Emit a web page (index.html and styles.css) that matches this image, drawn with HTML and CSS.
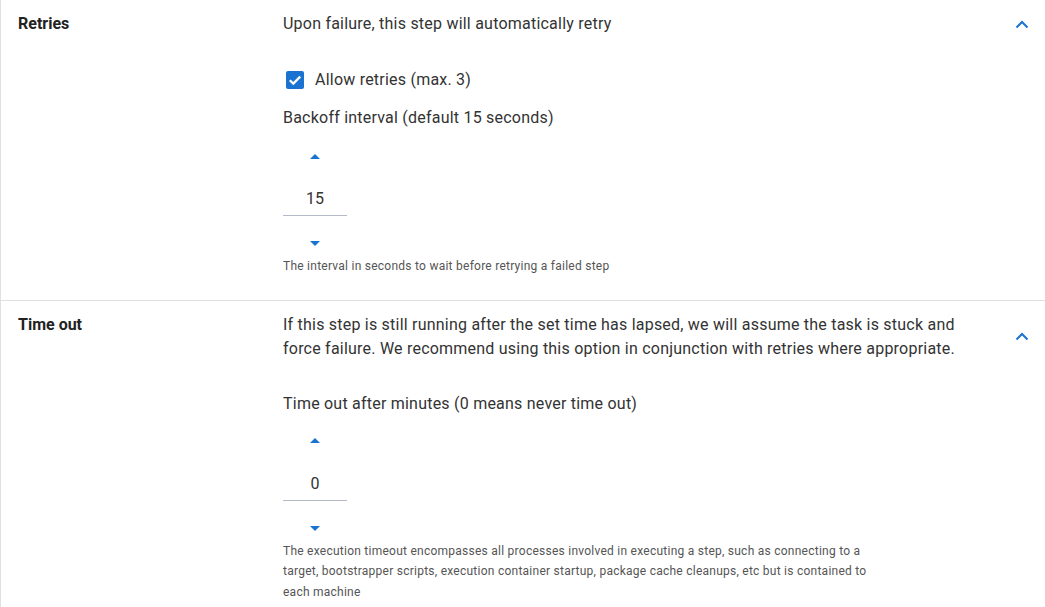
FILE: index.html
```html
<!DOCTYPE html>
<html>
<head>
<meta charset="utf-8">
<link rel="stylesheet" href="styles.css">
</head>
<body>
<div class="page">
  <section class="row row-first">
    <div class="label">Retries</div>
    <div class="content">
      <div class="head">
        <div class="desc">Upon failure, this step will automatically retry</div>
        <button class="chev" aria-label="collapse">
          <svg width="14" height="9" viewBox="0 0 14 9"><path d="M1.5 7.5 L7 2 L12.5 7.5" fill="none" stroke="#1a73d0" stroke-width="2"/></svg>
        </button>
      </div>
      <div class="body">
        <label class="check">
          <span class="box"><svg width="16" height="16" viewBox="0 0 16 16"><path d="M2.8 8.2 L6.3 11.6 L13.2 4.6" fill="none" stroke="#fff" stroke-width="2.3"/></svg></span>
          <span>Allow retries (max. 3)</span>
        </label>
        <div class="field-label gap-a">Backoff interval (default 15 seconds)</div>
        <div class="spinner spinner-first">
          <span class="arrow up"></span>
          <div class="num">15</div>
          <span class="arrow down"></span>
        </div>
        <div class="helper">The interval in seconds to wait before retrying a failed step</div>
      </div>
    </div>
  </section>
  <section class="row">
    <div class="label">Time out</div>
    <div class="content">
      <div class="head">
        <div class="desc">If this step is still running after the set time has lapsed, we will assume the task is stuck and force failure. We recommend using this option in conjunction with retries where appropriate.</div>
        <button class="chev" aria-label="collapse">
          <svg width="14" height="9" viewBox="0 0 14 9"><path d="M1.5 7.5 L7 2 L12.5 7.5" fill="none" stroke="#1a73d0" stroke-width="2"/></svg>
        </button>
      </div>
      <div class="body">
        <div class="field-label">Time out after minutes (0 means never time out)</div>
        <div class="spinner spinner-tight">
          <span class="arrow up"></span>
          <div class="num">0</div>
          <span class="arrow down"></span>
        </div>
        <div class="helper">The execution timeout encompasses all processes involved in executing a step, such as connecting to a target, bootstrapper scripts, execution container startup, package cache cleanups, etc but is contained to each machine</div>
      </div>
    </div>
  </section>
</div>
</body>
</html>
```
FILE: styles.css
```css
html, body {
  margin: 0;
  padding: 0;
  background: #fff;
}
body {
  font-family: Roboto, "Liberation Sans", sans-serif;
  color: #333333;
}
.page {
  border-left: 1px solid #e0e0e0;
  min-height: 607px;
}
.row {
  display: flex;
  padding: 12px 11px 25px 17px;
}
.row-first {
  padding-bottom: 23px;
}
.row + .row {
  border-top: 1px solid #e0e0e0;
}
.label {
  width: 265px;
  flex: none;
  font-size: 16px;
  line-height: 24px;
  font-weight: 700;
  color: #222;
}
.content {
  flex: 1;
}
.head {
  display: flex;
  align-items: center;
}
.desc {
  flex: 1;
  max-width: 700px;
  font-size: 16px;
  line-height: 24px;
  letter-spacing: 0.22px;
}
.chev {
  margin-left: auto;
  width: 24px;
  height: 24px;
  border: 0;
  background: none;
  padding: 0;
  display: flex;
  align-items: center;
  justify-content: center;
}
.body {
  padding-top: 31px;
}
.check {
  display: flex;
  align-items: center;
  gap: 11px;
  height: 24px;
  padding-left: 3px;
  font-size: 16px;
  line-height: 24px;
  letter-spacing: 0.22px;
  margin-top: 1px;
}
.box {
  width: 18px;
  height: 18px;
  border-radius: 2px;
  background: #1a73d0;
  display: flex;
  align-items: center;
  justify-content: center;
}
.field-label {
  font-size: 16px;
  line-height: 24px;
  letter-spacing: 0.22px;
}
.gap-a {
  margin-top: 14px;
}
.spinner {
  width: 64px;
  display: flex;
  flex-direction: column;
  align-items: center;
  padding-top: 15px;
}
.spinner-tight {
  padding-top: 13px;
}
.arrow {
  width: 0;
  height: 0;
  border-left: 5px solid transparent;
  border-right: 5px solid transparent;
}
.arrow.up {
  border-bottom: 5px solid #1a73d0;
  margin: 9px 0 10px;
}
.arrow.down {
  border-top: 5px solid #1a73d0;
  margin: 25px 0 10px;
}
.num {
  width: 64px;
  text-align: center;
  font-size: 16px;
  line-height: 24px;
  padding: 19px 0 4px;
  border-bottom: 1px solid #b5bac8;
}
.spinner-first .num {
  padding-top: 18px;
}
.helper {
  font-size: 12px;
  line-height: 20.5px;
  letter-spacing: 0.25px;
  color: #555;
  max-width: 600px;
}
```
